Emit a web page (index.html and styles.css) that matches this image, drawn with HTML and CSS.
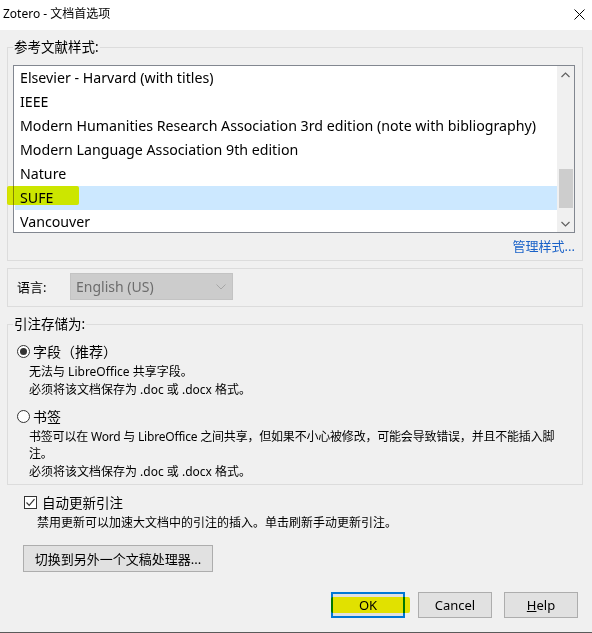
FILE: index.html
```html
<!DOCTYPE html>
<html lang="zh-CN">
<head>
<meta charset="utf-8">
<title>Zotero - 文档首选项</title>
<link rel="stylesheet" href="styles.css">
</head>
<body>
<div class="dialog">
  <div class="titlebar">
    <span class="title">Zotero - 文档首选项</span>
    <svg class="close" width="11" height="11" viewBox="0 0 11 11"><path d="M0.5 0.5L10.5 10.5M10.5 0.5L0.5 10.5" stroke="#000" stroke-width="1"/></svg>
  </div>
  <div class="main">
    <fieldset class="group group-styles">
      <legend>参考文献样式:</legend>
      <div class="listbox">
        <div class="rows">
          <div class="row">Elsevier - Harvard (with titles)</div>
          <div class="row">IEEE</div>
          <div class="row">Modern Humanities Research Association 3rd edition (note with bibliography)</div>
          <div class="row">Modern Language Association 9th edition</div>
          <div class="row">Nature</div>
          <div class="row selected">SUFE</div>
          <div class="row">Vancouver</div>
        </div>
        <div class="scrollbar">
          <div class="arrow"><svg width="9" height="6" viewBox="0 0 9 6"><path d="M0.5 5L4.5 1L8.5 5" fill="none" stroke="#606060" stroke-width="1.2"/></svg></div>
          <div class="track"><div class="thumb"></div></div>
          <div class="arrow"><svg width="9" height="6" viewBox="0 0 9 6"><path d="M0.5 1L4.5 5L8.5 1" fill="none" stroke="#606060" stroke-width="1.2"/></svg></div>
        </div>
      </div>
      <div class="manage"><a class="link">管理样式...</a></div>
    </fieldset>

    <fieldset class="group group-lang">
      <span class="lang-label">语言:</span>
      <div class="select">
        <span>English (US)</span>
        <svg width="10" height="6" viewBox="0 0 10 6"><path d="M0.5 0.5L5 5L9.5 0.5" fill="none" stroke="#a6a6a6" stroke-width="1"/></svg>
      </div>
    </fieldset>

    <fieldset class="group group-store">
      <legend>引注存储为:</legend>
      <div class="option first">
        <span class="radio checked"></span><span>字段（推荐）</span>
      </div>
      <p class="desc">无法与 LibreOffice 共享字段。</p>
      <p class="desc gap">必须将该文档保存为 .doc 或 .docx 格式。</p>
      <div class="option second">
        <span class="radio"></span><span>书签</span>
      </div>
      <p class="desc tight">书签可以在 Word 与 LibreOffice 之间共享，但如果不小心被修改，可能会导致错误，并且不能插入脚<br>注。</p>
      <p class="desc gap last">必须将该文档保存为 .doc 或 .docx 格式。</p>
    </fieldset>

    <div class="check-row">
      <span class="checkbox"><svg width="11" height="11" viewBox="0 0 11 11"><path d="M1.5 5.5L4.2 8.3L9.5 2.2" fill="none" stroke="#333" stroke-width="1.2"/></svg></span>
      <span>自动更新引注</span>
    </div>
    <p class="check-desc">禁用更新可以加速大文档中的引注的插入。单击刷新手动更新引注。</p>

    <div class="switch-row"><button class="btn switch">切换到另外一个文稿处理器...</button></div>
  </div>
  <div class="footer">
    <button class="btn ok">OK</button>
    <button class="btn">Cancel</button>
    <button class="btn"><u>H</u>elp</button>
  </div>
  <span class="mark mark-sufe"></span>
  <span class="mark mark-ok"></span>
</div>
</body>
</html>
```
FILE: styles.css
```css
* { box-sizing: border-box; }
body {
  margin: 0;
  font-family: "Noto Sans", "Noto Sans CJK SC", sans-serif;
  color: #000;
}
.dialog {
  position: relative;
  width: 592px;
  height: 633px;
  background: #f0f0f0;
  border-bottom: 1px solid #5a5a5a;
  display: flex;
  flex-direction: column;
}
.titlebar {
  height: 30px;
  background: #fff;
  display: flex;
  align-items: center;
  justify-content: space-between;
  padding: 0 7px 2px 3px;
  font-size: 12px;
  line-height: 16px;
}
.main {
  display: flex;
  flex-direction: column;
  padding: 0 9px 0 7px;
}
.group {
  margin: 0;
  border: 1px solid #dcdcdc;
  min-width: 0;
}
legend {
  font-size: 13.5px;
  line-height: 16px;
  padding: 0 1px;
}
.group-styles {
  margin-top: 9px;
  padding: 10px 7px 5px 5px;
}
.listbox {
  height: 168px;
  border: 1px solid #828790;
  background: #fff;
  display: flex;
}
.rows {
  flex: 1;
  overflow: hidden;
  padding-left: 1px;
}
.row {
  height: 24px;
  line-height: 23px;
  padding-left: 5px;
  font-size: 14.2px;
  white-space: nowrap;
}
.row.selected { background: #cce8ff; }
.scrollbar {
  width: 17px;
  background: #f0f0f0;
  display: flex;
  flex-direction: column;
}
.arrow {
  height: 17px;
  display: flex;
  align-items: center;
  justify-content: center;
}
.track {
  flex: 1;
  padding: 86px 1px 0 2px;
}
.thumb {
  height: 39px;
  background: #cdcdcd;
}
.manage {
  margin-top: 4px;
  text-align: right;
  line-height: 18px;
  font-size: 13px;
}
.link { color: #1a62c8; }
.group-lang {
  margin-top: 7px;
  padding: 4px 9px 6px 9px;
  display: flex;
  align-items: center;
}
.lang-label {
  width: 53px;
  font-size: 13px;
  line-height: 18px;
}
.select {
  width: 163px;
  height: 27px;
  background: #cccccc;
  border: 1px solid #c3c3c3;
  display: flex;
  align-items: center;
  justify-content: space-between;
  padding: 0 6px 0 5px;
  color: #6d6d6d;
  font-size: 14px;
}
.group-store {
  margin-top: 9px;
  padding: 9px 5px 4px 5px;
}
.option {
  display: flex;
  align-items: center;
  gap: 3px;
  height: 20px;
  padding-left: 4px;
  font-size: 14px;
}
.option.second { margin-top: 8px; }
.radio {
  width: 13px;
  height: 13px;
  border: 1px solid #333;
  border-radius: 50%;
  background: #fff;
  display: flex;
  align-items: center;
  justify-content: center;
}
.radio.checked::after {
  content: "";
  width: 7px;
  height: 7px;
  border-radius: 50%;
  background: #333;
}
.desc {
  margin: 2px 0 0 0;
  padding-left: 16px;
  font-size: 12px;
  line-height: 17px;
}
.desc.tight { letter-spacing: -0.2px; }
.desc.gap { margin-top: 1px; }
.check-row {
  margin-top: 7px;
  padding-left: 17px;
  display: flex;
  align-items: center;
  gap: 5px;
  height: 20px;
  font-size: 13.5px;
}
.checkbox {
  width: 13px;
  height: 13px;
  border: 1px solid #333;
  background: #fff;
  display: flex;
  align-items: center;
  justify-content: center;
}
.check-desc {
  margin: 2px 0 0 0;
  padding-left: 30px;
  font-size: 12px;
  line-height: 17px;
}
.switch-row {
  margin-top: 14px;
  padding-left: 16px;
  display: flex;
}
.btn {
  font-family: inherit;
  background: #e1e1e1;
  border: 1px solid #adadad;
  color: #000;
  font-size: 13px;
  line-height: 16px;
  padding: 0;
  border-radius: 0;
}
.switch {
  width: 190px;
  height: 27px;
}
.footer {
  margin-top: 20px;
  display: flex;
  justify-content: flex-end;
  gap: 12px;
  padding-right: 14px;
}
.footer .btn {
  width: 74px;
  height: 26px;
}
.footer .ok {
  border: 2px solid #0078d7;
  margin-right: 1px;
}
.mark {
  position: absolute;
  mix-blend-mode: darken;
  border-radius: 2px;
}
.mark-sufe {
  left: 7px;
  top: 186px;
  width: 72px;
  height: 19px;
  background: #d4e600;
}
.mark-ok {
  left: 331px;
  top: 597px;
  width: 79px;
  height: 16px;
  background: #e4e200;
}
```
